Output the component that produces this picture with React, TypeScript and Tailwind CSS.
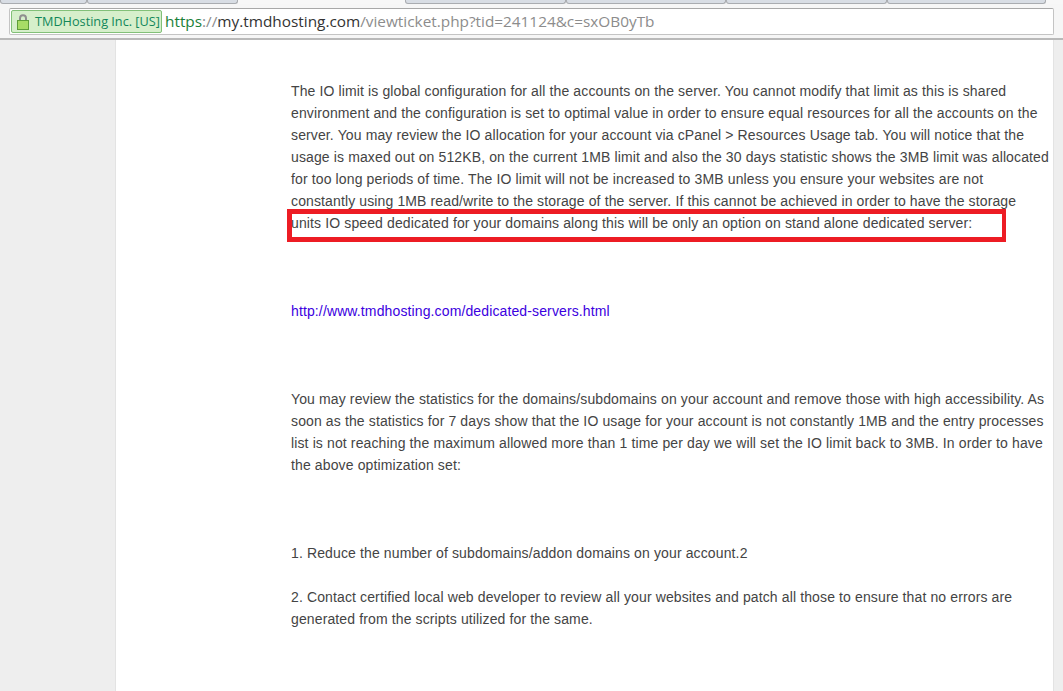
const para1 = [
  "The IO limit is global configuration for all the accounts on the server. You cannot modify that limit as this is shared",
  "environment and the configuration is set to optimal value in order to ensure equal resources for all the accounts on the",
  "server. You may review the IO allocation for your account via cPanel > Resources Usage tab. You will notice that the",
  "usage is maxed out on 512KB, on the current 1MB limit and also the 30 days statistic shows the 3MB limit was allocated",
  "for too long periods of time. The IO limit will not be increased to 3MB unless you ensure your websites are not",
  "constantly using 1MB read/write to the storage of the server. If this cannot be achieved in order to have the storage",
  "units IO speed dedicated for your domains along this will be only an option on stand alone dedicated server:",
];

const para2 = [
  "You may review the statistics for the domains/subdomains on your account and remove those with high accessibility. As",
  "soon as the statistics for 7 days show that the IO usage for your account is not constantly 1MB and the entry processes",
  "list is not reaching the maximum allowed more than 1 time per day we will set the IO limit back to 3MB. In order to have",
  "the above optimization set:",
];

const para3 = [
  "2. Contact certified local web developer to review all your websites and patch all those to ensure that no errors are",
  "generated from the scripts utilized for the same.",
];

function Lines({ lines }: { lines: string[] }) {
  return (
    <>
      {lines.map((line) => (
        <p key={line} className="h-[22px] whitespace-nowrap">
          {line}
        </p>
      ))}
    </>
  );
}

function Tab({ className }: { className: string }) {
  return <div className={`h-[4px] bg-[#d8dde4] border border-t-0 border-[#a9acb0] rounded-b-[3px] ${className}`} />;
}

function TabStrip() {
  return (
    <div className="h-[4px] flex bg-[#f7f7f7] overflow-hidden">
      <Tab className="w-[87px]" />
      <Tab className="w-[151px]" />
      <div className="w-[167px]" />
      <Tab className="w-[161px]" />
      <Tab className="w-[160px]" />
      <Tab className="w-[161px]" />
      <Tab className="w-[159px]" />
    </div>
  );
}

function AddressBar() {
  return (
    <div className="h-[36px] bg-[#f6f6f6] border-b-2 border-[#b9b9b9] pt-[4px] pl-[9px]">
      <div className="h-[27px] w-[1045px] flex items-center bg-white border border-[#c4c4c4] border-t-[#a8a8a8] rounded-[2px] pl-[1px]">
        <div className="h-[23px] w-[151px] shrink-0 flex items-center bg-[#d6efcb] border border-[#82c078] rounded-[2px] pl-[5px]">
          <svg width="12" height="16" viewBox="0 0 12 16" className="shrink-0">
            <path d="M3 7V4.2a3 3 0 0 1 6 0V7" fill="none" stroke="#8f8f8f" strokeWidth="2" />
            <rect x="0.5" y="6.5" width="11" height="9" fill="#a8dc66" stroke="#5f9e3a" />
          </svg>
          <span className="ml-[6px] text-[12.7px] text-[#12875a] whitespace-nowrap font-['Open_Sans','Noto_Sans',sans-serif]">
            TMDHosting Inc. [US]
          </span>
        </div>
        <div className="ml-[3px] text-[15.35px] whitespace-nowrap font-['Open_Sans','Noto_Sans',sans-serif] text-[#8c8c8c]">
          <span className="text-[#1a8038]">https</span>
          <span>://</span>
          <span className="text-[#333]">my.tmdhosting.com</span>
          <span>/viewticket.php?tid=241124&amp;c=sxOB0yTb</span>
        </div>
      </div>
    </div>
  );
}

export default function App() {
  return (
    <div className="h-[691px] overflow-hidden flex flex-col bg-[#eeeeee] font-['Liberation_Sans',Arial,sans-serif]">
      <TabStrip />
      <AddressBar />
      <div className="flex-1 ml-[115px] mr-[9px] bg-white border-l border-r border-[#e3e3e3] pl-[175px] pt-[40px] text-[14px] leading-[22px] tracking-[0.125px] text-[#444444]">
        <div className="relative">
          <Lines lines={para1} />
          <div className="absolute left-[-4px] top-[129px] w-[719px] h-[33px] border-[5px] border-r-[4px] border-[#ed1c24]" />
        </div>
        <a href="#" className="block mt-[66px] h-[22px] text-[#3b00e0]">
          http://www.tmdhosting.com/dedicated-servers.html
        </a>
        <div className="mt-[66px]">
          <Lines lines={para2} />
        </div>
        <p className="mt-[66px] h-[22px]">1. Reduce the number of subdomains/addon domains on your account.2</p>
        <div className="mt-[22px]">
          <Lines lines={para3} />
        </div>
      </div>
    </div>
  );
}
